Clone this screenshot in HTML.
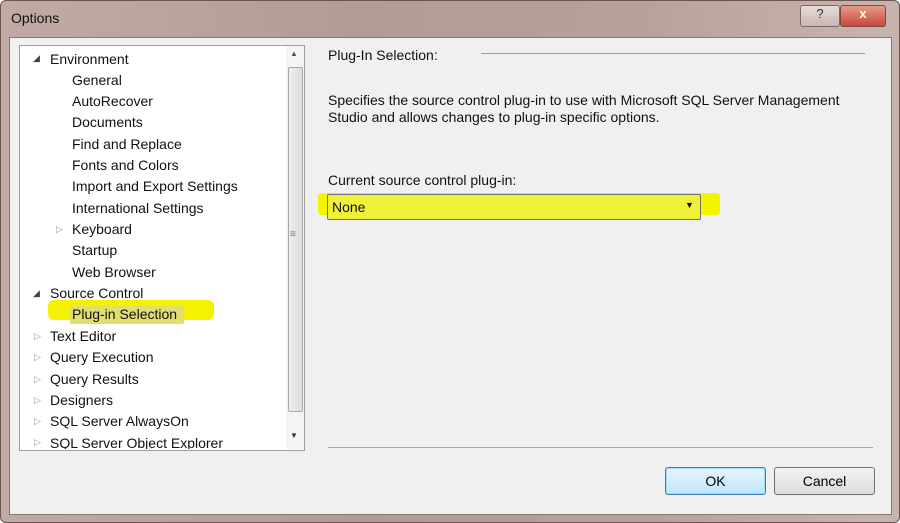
<html><head><style>
body{margin:0;width:900px;height:523px;overflow:hidden;font-family:"Liberation Sans",sans-serif;background:#fff}
.frame{position:absolute;left:0;top:0;width:898px;height:521px;border:1px solid #6b5550;border-radius:6px;background:linear-gradient(90deg,#c2aaa4,#b49a94 40%,#b8a09a 70%,#c8b4ae);}
.title{position:absolute;left:11px;top:10px;font-size:14px;color:#111}
.client{position:absolute;left:9px;top:37px;width:881px;height:476px;background:#f0f0f0;border:1px solid #8a7772}
.abs{position:absolute}
.tree{left:19px;top:45px;width:284px;height:404px;background:#fff;border:1px solid #a0a0a0;overflow:hidden}
.it{position:absolute;font-size:14px;color:#111;white-space:nowrap}
.tri{position:absolute;font-size:9px;color:#444}
.sb{left:285px;top:46px;width:18px;height:403px;background:#f4f4f4}
.btn{position:absolute;top:467px;height:26px;width:99px;border:1px solid #707070;border-radius:3px;font-size:14px;text-align:center;line-height:26px;background:linear-gradient(#f2f2f2,#dcdcdc)}
</style></head><body>
<div class="frame"></div>
<div class="title">Options</div>
<div class="abs" style="left:800px;top:5px;width:38px;height:20px;border:1px solid #7d6a66;border-radius:3px;background:linear-gradient(#e8dcd8,#c8b6b2);font-size:13px;text-align:center;color:#333">?</div>
<div class="abs" style="left:840px;top:5px;width:44px;height:20px;border:1px solid #7d4a40;border-radius:3px;background:linear-gradient(#e89a88,#c8493a);font-size:13px;font-weight:bold;text-align:center;color:#fff">x</div>
<div class="client"></div>
<div class="abs tree">
<div class="abs sb" style="left:266px;top:0"></div>
<div class="abs" style="left:268px;top:21px;width:13px;height:343px;border:1px solid #a8a8a8;border-radius:2px;background:linear-gradient(90deg,#eee,#ddd)"></div>
<div class="abs" style="left:270px;top:3px;font-size:8px;color:#555">▲</div>
<div class="abs" style="left:270px;top:385px;font-size:8px;color:#333">▼</div>
<div class="abs" style="left:270px;top:183px;font-size:10px;color:#777">≡</div>
<div class="abs" style="left:28px;top:254px;width:166px;height:20px;background:#f4f200;border-radius:6px"></div>
<div class="abs" style="left:50px;top:260px;width:114px;height:18px;background:#e0de70;border-radius:2px"></div>
</div>
<div style="position:absolute;left:20px;top:46px">
<span class="tri" style="left:13px;top:7px">◢</span><span class="it" style="left:30px;top:5px">Environment</span>
<span class="it" style="left:52px;top:26px">General</span>
<span class="it" style="left:52px;top:47px">AutoRecover</span>
<span class="it" style="left:52px;top:68px">Documents</span>
<span class="it" style="left:52px;top:90px">Find and Replace</span>
<span class="it" style="left:52px;top:111px">Fonts and Colors</span>
<span class="it" style="left:52px;top:132px">Import and Export Settings</span>
<span class="it" style="left:52px;top:154px">International Settings</span>
<span class="tri" style="left:36px;top:178px;color:#999">▷</span><span class="it" style="left:52px;top:175px">Keyboard</span>
<span class="it" style="left:52px;top:196px">Startup</span>
<span class="it" style="left:52px;top:218px">Web Browser</span>
<span class="tri" style="left:13px;top:242px">◢</span><span class="it" style="left:30px;top:239px">Source Control</span>
<span class="it" style="left:52px;top:260px">Plug-in Selection</span>
<span class="tri" style="left:14px;top:285px;color:#999">▷</span><span class="it" style="left:30px;top:282px">Text Editor</span>
<span class="tri" style="left:14px;top:306px;color:#999">▷</span><span class="it" style="left:30px;top:303px">Query Execution</span>
<span class="tri" style="left:14px;top:328px;color:#999">▷</span><span class="it" style="left:30px;top:325px">Query Results</span>
<span class="tri" style="left:14px;top:349px;color:#999">▷</span><span class="it" style="left:30px;top:346px">Designers</span>
<span class="tri" style="left:14px;top:370px;color:#999">▷</span><span class="it" style="left:30px;top:367px">SQL Server AlwaysOn</span>
</div>
<div class="abs" style="left:20px;top:434px;width:264px;height:15px;overflow:hidden"><span class="tri" style="left:14px;top:3px;color:#999">▷</span><span class="it" style="left:30px;top:1px">SQL Server Object Explorer</span></div>
<div class="it" style="left:328px;top:47px;font-size:14px">Plug-In Selection:</div>
<div class="abs" style="left:481px;top:53px;width:384px;height:1px;background:#a0a0a0"></div>
<div class="it" style="left:328px;top:92px;font-size:14px;line-height:17px;white-space:normal;width:525px">Specifies the source control plug-in to use with Microsoft SQL Server Management Studio and allows changes to plug-in specific options.</div>
<div class="it" style="left:328px;top:172px;font-size:14px">Current source control plug-in:</div>
<div class="abs" style="left:318px;top:193px;width:402px;height:22px;background:#f4f400;border-radius:4px"></div>
<div class="abs" style="left:327px;top:194px;width:372px;height:24px;border:1px solid #707070;border-radius:2px;background:#eef03a"></div>
<div class="it" style="left:332px;top:199px;font-size:14px">None</div>
<div class="abs" style="left:685px;top:200px;font-size:9px;color:#111">▼</div>
<div class="abs" style="left:328px;top:447px;width:545px;height:1px;background:#a8a8a8"></div>
<div class="btn" style="left:665px;border-color:#3c7fb1;background:linear-gradient(#e8f4fc,#bee6fd);box-shadow:inset 0 0 0 1px #9fdbf8">OK</div>
<div class="btn" style="left:774px">Cancel</div>
</body></html>
